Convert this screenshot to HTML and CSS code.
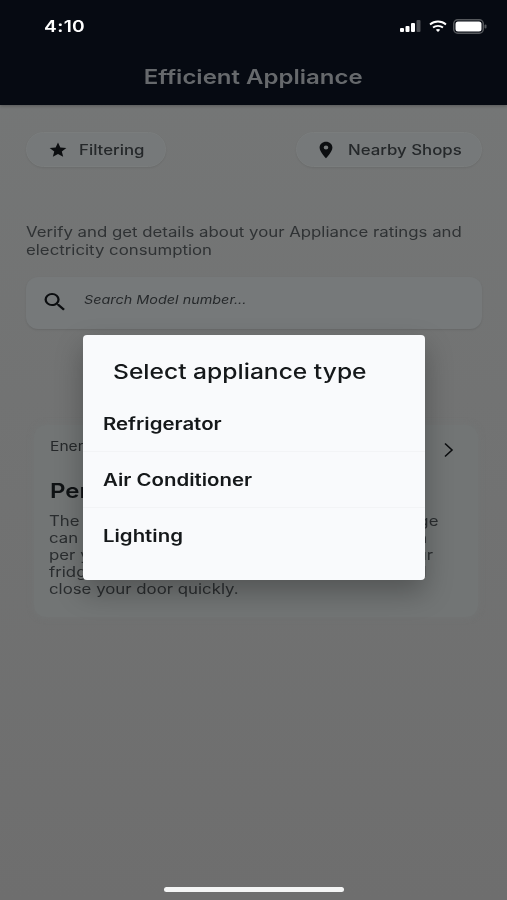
FILE: index.html
```html
<!DOCTYPE html>
<html lang="en">
<head>
<meta charset="utf-8">
<title>Efficient Appliance</title>
<link rel="stylesheet" href="styles.css">
</head>
<body>
<div class="screen">
  <header class="topbar">
    <div class="status">
      <span class="time wide">4:10</span>
      <div class="status-icons">
        <svg class="signal" width="23" height="13" viewBox="0 0 23 13"><rect x="0" y="8" width="4" height="4" rx="1" fill="#fff"/><rect x="5.500" y="6" width="4" height="6" rx="1" fill="#fff"/><rect x="11" y="3" width="4" height="9" rx="1" fill="#fff"/><rect x="16.500" y="0" width="4" height="12" rx="1" fill="#4a4d52"/></svg>
        <svg class="wifi" width="18" height="13" viewBox="0 0 18 13"><path d="M1 4.500C5.500.5 12.500.5 17 4.500" fill="none" stroke="#fff" stroke-width="1.800"/><path d="M4 7.500C6.800 5.200 11.200 5.200 14 7.500" fill="none" stroke="#fff" stroke-width="1.800"/><path d="M6.800 9.800 9 12l2.200-2.200C9.800 8.800 8.200 8.800 6.800 9.800Z" fill="#fff"/></svg>
        <svg class="battery" width="34" height="15" viewBox="0 0 34 15"><rect x=".75" y=".75" width="29.500" height="13.500" rx="4" fill="none" stroke="#55585c" stroke-width="1.500"/><rect x="2.500" y="2.500" width="26" height="10" rx="2.500" fill="#fff"/><rect x="31.500" y="5.500" width="2" height="4" rx="1" fill="#55585c"/></svg>
      </div>
    </div>
    <h1 class="title"><span class="wide center">Efficient Appliance</span></h1>
  </header>

  <main class="content">
    <div class="chips">
      <button class="chip chip-filter">
        <svg width="20" height="18" viewBox="0 0 24 24" preserveAspectRatio="none"><path d="M12 17.300 18.200 21l-1.600-7L22 9.200l-7.200-.6L12 2 9.200 8.600 2 9.200 7.500 14l-1.700 7z" fill="#0c0e10"/></svg>
        <span class="wide">Filtering</span>
      </button>
      <button class="chip chip-shops">
        <svg width="22" height="20" viewBox="0 0 24 24" preserveAspectRatio="none"><path d="M12 2C8.100 2 5 5.100 5 9c0 5.200 7 13 7 13s7-7.800 7-13c0-3.900-3.100-7-7-7Zm0 9.500A2.500 2.500 0 1 1 12 6.500a2.500 2.500 0 0 1 0 5Z" fill="#0c0e10"/></svg>
        <span class="wide">Nearby Shops</span>
      </button>
    </div>

    <p class="intro"><span class="wide">Verify and get details about your Appliance ratings and</span><br><span class="wide">electricity consumption</span></p>

    <div class="search">
      <svg class="search-icon" width="28" height="24" viewBox="0 0 24 24" preserveAspectRatio="none"><path d="M15.500 14h-.79l-.28-.27A6.470 6.470 0 0 0 16 9.500 6.500 6.500 0 1 0 9.500 16c1.610 0 3.090-.59 4.230-1.570l.27.28v.79l5 4.990L20.490 19l-4.990-5zm-6 0C7.010 14 5 11.990 5 9.500S7.010 5 9.500 5 14 7.010 14 9.500 11.990 14 9.500 14z" fill="#0c0e10"/></svg>
      <span class="placeholder wide">Search Model number...</span>
    </div>

    <section class="tip">
      <div class="tip-head">
        <span class="tip-label wide">Energy saving tips</span>
        <svg class="chevron" width="16" height="18" viewBox="0 0 16 18"><path d="M4 2.500 11 9l-7 6.500" fill="none" stroke="#0c0e10" stroke-width="1.600"/></svg>
      </div>
      <h2 class="tip-title"><span class="wide">Perfect fridge</span></h2>
      <p class="tip-text"><span class="wide">The average fridge runs all day, and a new fridge</span><br><span class="wide">can use less energy, and it can save you a lot in</span><br><span class="wide">per year. For best results, keep the foods in your</span><br><span class="wide">fridge well organised so you can find foods and</span><br><span class="wide">close your door quickly.</span></p>
    </section>
  </main>

  <div class="dialog" role="dialog">
    <h3 class="dialog-title"><span class="wide">Select appliance type</span></h3>
    <ul class="options">
      <li class="option"><span class="wide">Refrigerator</span></li>
      <li class="option"><span class="wide">Air Conditioner</span></li>
      <li class="option"><span class="wide">Lighting</span></li>
    </ul>
  </div>

  <div class="home-bar"></div>
</div>
</body>
</html>
```
FILE: styles.css
```css
* { box-sizing: border-box; }
html, body { margin: 0; padding: 0; }
body { font-family: Inter, "Liberation Sans", sans-serif; background: #707272; }
.screen { position: relative; width: 507px; height: 900px; overflow: hidden; background: linear-gradient(#757777, #6e6e6e); filter: blur(.45px); }

/* The reference is stretched sideways, so its glyphs are wider than tall. */
.wide { display: inline-block; transform: scaleX(1.2); transform-origin: left center; white-space: nowrap; }
.wide.center { transform-origin: center; }

.topbar { height: 105px; background: #060a12; padding: 0 20px 0 44px; box-shadow: 0 1px 3px rgba(0,0,0,.25); }
.status { height: 52px; display: flex; justify-content: space-between; align-items: center; }
.time { color: #fff; font-size: 16px; font-weight: 600; letter-spacing: .3px; }
.status-icons { display: flex; align-items: center; gap: 6px; }
.title { margin: 0 -20px 0 -44px; text-align: center; color: #66696c; font-size: 20px; font-weight: 600; line-height: 50px; }

.content { padding: 27px 25px 0 26px; }
.chips { display: flex; justify-content: space-between; }
.chip { height: 35px; display: flex; align-items: center; border: 1px solid #7a7d7d; border-radius: 18px; background: #76797a; color: #25282a; font: 500 14px Inter, "Liberation Sans", sans-serif; box-shadow: 0 1px 2px rgba(0,0,0,.08); }
.chip-filter { width: 140px; padding: 0 0 0 21px; gap: 11px; }
.chip-shops { width: 186px; padding: 0 0 0 18px; gap: 11px; }

.intro { margin: 56px 0 0; color: #2f3234; font-size: 14px; line-height: 17.500px; white-space: nowrap; }

.search { height: 52px; margin: 19px 0 0; padding: 0 0 0 15px; display: flex; align-items: center; gap: 15px; background: #76797a; border-radius: 12px; box-shadow: 0 1px 2px rgba(0,0,0,.1); }
.search-icon { margin-bottom: 2px; }
.placeholder { margin-bottom: 7px; color: #26292b; font-size: 12px; font-style: italic; }

.tip { margin: 96px 4px 0 8px; height: 192px; padding: 10px 16px; background: #727575; border-radius: 12px; box-shadow: 0 0 6px #727575; }
.tip-head { display: flex; justify-content: space-between; align-items: center; padding-right: 5px; height: 22px; }
.chevron { margin-top: 8px; }
.tip-label { color: #25282a; font-size: 13px; }
.tip-title { margin: 22px 0 0; color: #0f1214; font-size: 20px; font-weight: 600; line-height: 24px; }
.tip-text { margin: 9px 0 0 -1px; color: #2a2d2f; font-size: 14px; line-height: 17px; white-space: nowrap; }

.dialog { position: absolute; left: 83px; top: 335px; width: 342px; height: 245px; background: #f9fafc; border-radius: 4px; box-shadow: 0 12px 28px rgba(0,0,0,.28); }
.dialog-title { margin: 0; padding: 22px 0 0 30px; height: 61px; color: #15181a; font-size: 20.500px; font-weight: 500; line-height: 30px; }
.options { margin: 0; padding: 0; list-style: none; }
.option { height: 56px; padding: 0 0 0 20px; display: flex; align-items: center; color: #15181a; font-size: 17px; font-weight: 600; border-bottom: 1px solid #f3f4f6; }
.option:last-child { border-bottom: 0; }

.home-bar { position: absolute; left: 164px; bottom: 8px; width: 180px; height: 5px; border-radius: 3px; background: #f4f5f5; }
```
